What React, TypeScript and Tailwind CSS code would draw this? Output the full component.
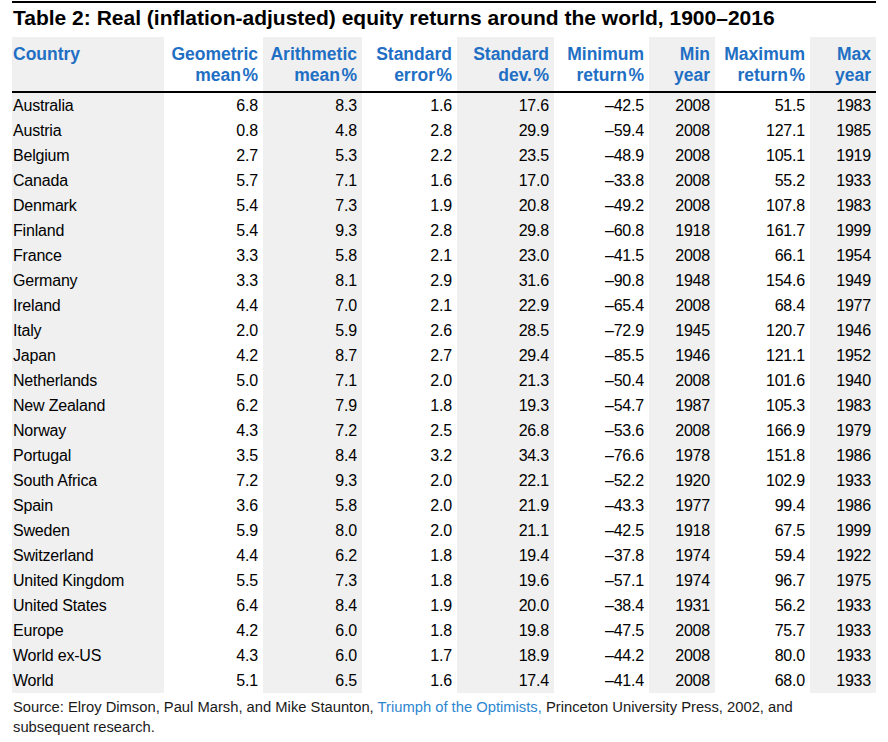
const rows: [string, string, string, string, string, string, string, string, string][] = [
  ['Australia', '6.8', '8.3', '1.6', '17.6', '–42.5', '2008', '51.5', '1983'],
  ['Austria', '0.8', '4.8', '2.8', '29.9', '–59.4', '2008', '127.1', '1985'],
  ['Belgium', '2.7', '5.3', '2.2', '23.5', '–48.9', '2008', '105.1', '1919'],
  ['Canada', '5.7', '7.1', '1.6', '17.0', '–33.8', '2008', '55.2', '1933'],
  ['Denmark', '5.4', '7.3', '1.9', '20.8', '–49.2', '2008', '107.8', '1983'],
  ['Finland', '5.4', '9.3', '2.8', '29.8', '–60.8', '1918', '161.7', '1999'],
  ['France', '3.3', '5.8', '2.1', '23.0', '–41.5', '2008', '66.1', '1954'],
  ['Germany', '3.3', '8.1', '2.9', '31.6', '–90.8', '1948', '154.6', '1949'],
  ['Ireland', '4.4', '7.0', '2.1', '22.9', '–65.4', '2008', '68.4', '1977'],
  ['Italy', '2.0', '5.9', '2.6', '28.5', '–72.9', '1945', '120.7', '1946'],
  ['Japan', '4.2', '8.7', '2.7', '29.4', '–85.5', '1946', '121.1', '1952'],
  ['Netherlands', '5.0', '7.1', '2.0', '21.3', '–50.4', '2008', '101.6', '1940'],
  ['New Zealand', '6.2', '7.9', '1.8', '19.3', '–54.7', '1987', '105.3', '1983'],
  ['Norway', '4.3', '7.2', '2.5', '26.8', '–53.6', '2008', '166.9', '1979'],
  ['Portugal', '3.5', '8.4', '3.2', '34.3', '–76.6', '1978', '151.8', '1986'],
  ['South Africa', '7.2', '9.3', '2.0', '22.1', '–52.2', '1920', '102.9', '1933'],
  ['Spain', '3.6', '5.8', '2.0', '21.9', '–43.3', '1977', '99.4', '1986'],
  ['Sweden', '5.9', '8.0', '2.0', '21.1', '–42.5', '1918', '67.5', '1999'],
  ['Switzerland', '4.4', '6.2', '1.8', '19.4', '–37.8', '1974', '59.4', '1922'],
  ['United Kingdom', '5.5', '7.3', '1.8', '19.6', '–57.1', '1974', '96.7', '1975'],
  ['United States', '6.4', '8.4', '1.9', '20.0', '–38.4', '1931', '56.2', '1933'],
  ['Europe', '4.2', '6.0', '1.8', '19.8', '–47.5', '2008', '75.7', '1933'],
  ['World ex-US', '4.3', '6.0', '1.7', '18.9', '–44.2', '2008', '80.0', '1933'],
  ['World', '5.1', '6.5', '1.6', '17.4', '–41.4', '2008', '68.0', '1933'],
];

// hair space before the % sign, as in the printed table
const headers: [string, string][] = [
  ['Country', ''],
  ['Geometric', 'mean\u200a%'],
  ['Arithmetic', 'mean\u200a%'],
  ['Standard', 'error\u200a%'],
  ['Standard', 'dev.\u200a%'],
  ['Minimum', 'return\u200a%'],
  ['Min', 'year'],
  ['Maximum', 'return\u200a%'],
  ['Max', 'year'],
];

const widths = ['w-[152px]', 'w-[99px]', 'w-[99px]', 'w-[95px]', 'w-[97px]', 'w-[95px]', 'w-[66px]', 'w-[95px]', 'w-[66px]'];

export default function App() {
  return (
    <div className="w-[888px] h-[742px] bg-white pl-[12px] pt-[1px] text-black" style={{ fontFamily: '"Liberation Sans", Arial, sans-serif' }}>
      <div className="w-[864px] border-t-2 border-black">
        <h1 className="h-[34px] pl-[1px] pt-[2px] text-[21px] font-bold leading-[26px]">
          Table 2: Real (inflation-adjusted) equity returns around the world, 1900–2016
        </h1>
        <table className="w-[864px] table-fixed border-collapse">
          <colgroup>
            {widths.map((w, i) => (
              <col key={i} className={w} />
            ))}
          </colgroup>
          <thead>
            <tr className="border-b-2 border-black">
              {headers.map(([a, b], i) => (
                <th
                  key={i}
                  className={`h-[55px] align-top pt-[7px] text-[17.5px] font-bold leading-[21px] text-[#1f6fc4] ${
                    i === 0 ? 'text-left pl-[1px]' : 'text-right pr-[5px]'
                  } ${i % 2 === 0 ? 'bg-[#f0f0f0]' : ''}`}
                >
                  {a}
                  {b && <br />}
                  {b}
                </th>
              ))}
            </tr>
          </thead>
          <tbody>
            {rows.map((r) => (
              <tr key={r[0]}>
                {r.map((c, i) => (
                  <td
                    key={i}
                    className={`h-[25px] p-0 pt-[1px] text-[16px] leading-[24px] tracking-[-0.2px] ${
                      i === 0 ? 'text-left pl-[1px]' : 'text-right pr-[5px]'
                    } ${i % 2 === 0 ? 'bg-[#f0f0f0]' : ''}`}
                  >
                    {c}
                  </td>
                ))}
              </tr>
            ))}
          </tbody>
        </table>
        <p className="pt-[4px] pl-[1px] text-[14.75px] leading-[20px] text-[#1a1a1a]">
          Source: Elroy Dimson, Paul Marsh, and Mike Staunton,{' '}
          <span className="text-[#2d86d0]">Triumph of the Optimists,</span> Princeton University Press, 2002, and
          <br />
          subsequent research.
        </p>
      </div>
    </div>
  );
}
